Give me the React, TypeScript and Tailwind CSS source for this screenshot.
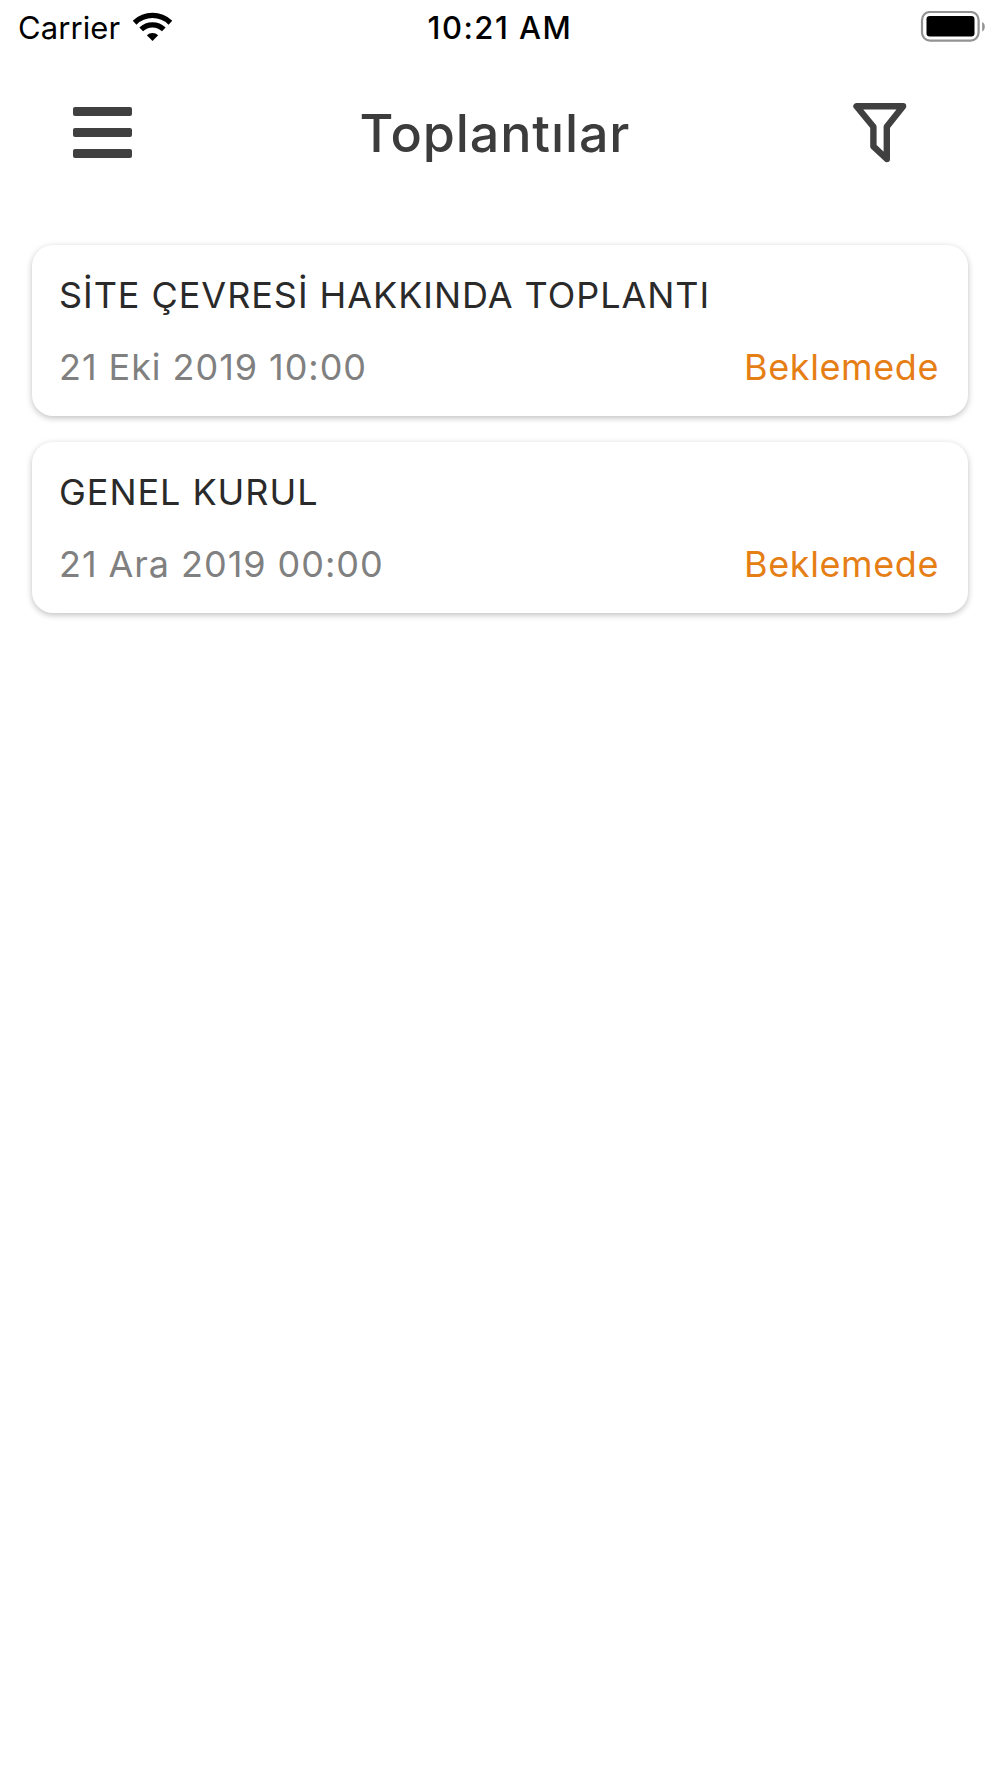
const meetings = [
    { title: "SİTE ÇEVRESİ HAKKINDA TOPLANTI", date: "21 Eki 2019 10:00", status: "Beklemede" },
    { title: "GENEL KURUL", date: "21 Ara 2019 00:00", status: "Beklemede" },
];

function WifiIcon() {
    return (
        <svg className="ml-[13px] h-[30px] w-[39px]" viewBox="0 0 40 30" fill="none" stroke="#000">
            <path d="M1.6 10.6a26.3 26.3 0 0 1 36.8 0" strokeWidth="5.6" />
            <path d="M8.4 17.4a16.7 16.7 0 0 1 23.2 0" strokeWidth="5.4" />
            <path d="M20 29.4l-5.8-6a8.5 8.5 0 0 1 11.6 0z" fill="#000" stroke="none" />
        </svg>
    );
}

function BatteryIcon() {
    return (
        <svg className="h-[32px] w-[65px]" viewBox="0 0 65 32" fill="none">
            <rect x="2" y="1" width="56.600" height="28.600" rx="8" stroke="#929292" strokeWidth="2.2" />
            <rect x="6.5" y="5" width="48" height="20.4" rx="3.2" fill="#000" />
            <path d="M62.2 11c1.6.6 2.6 2.5 2.6 4.7s-1 4.100-2.600 4.700z" fill="#929292" />
        </svg>
    );
}

function StatusBar() {
    return (
        <div className="grid h-[54px] grid-cols-3 items-center px-[15px] text-black">
            <div className="flex items-center pl-[3px]">
                <span className="pt-[1px] text-[31px] leading-[53px] tracking-[0.1px]">Carrier</span>
                <WifiIcon />
            </div>
            <span className="pt-[1px] text-center text-[31px] font-medium leading-[53px] tracking-[1.500px]">10:21 AM</span>
            <div className="flex justify-end">
                <BatteryIcon />
            </div>
        </div>
    );
}

function Header() {
    return (
        <div className="flex h-[157px] items-center justify-between pl-[73px] pr-[93px]">
            <button className="flex flex-col gap-[12px]">
                <div className="h-[9px] w-[59px] rounded-[2px] bg-[#404040]"></div>
                <div className="h-[9px] w-[59px] rounded-[2px] bg-[#404040]"></div>
                <div className="h-[9px] w-[59px] rounded-[2px] bg-[#404040]"></div>
            </button>
            <h1 className="pl-[5px] pt-[2px] text-[52px] font-medium leading-[60px] tracking-[0.9px] text-[#3c3c3c]">Toplantılar</h1>
            <button>
                <svg className="h-[60px] w-[54px]" viewBox="0 0 54 60" fill="none" stroke="#404040" strokeWidth="6.4" strokeLinejoin="round">
                    <path d="M3.500 3.300h46.600L33.800 23.800v32.200L20.400 43.400V23.800z" />
                </svg>
            </button>
        </div>
    );
}

export default function App() {
    return (
        <div className="min-h-[1778px] w-[1000px] bg-white font-['Inter',sans-serif]">
            <StatusBar />
            <Header />
            <div className="flex flex-col gap-[26px] px-8 pt-[34px]">
                {meetings.map((m) => (
                    <div key={m.title} className="flex h-[171px] flex-col gap-7 rounded-[21px] bg-white pl-[27px] pr-[29px] pt-7 shadow-[0_2px_6px_rgba(0,0,0,0.25)]">
                        <h2 className="text-[36px] leading-[44px] tracking-[0.95px] text-[#2a2a2a]">{m.title}</h2>
                        <div className="flex justify-between text-[36px] leading-[44px]">
                            <span className="tracking-[0.95px] text-[#808080]">{m.date}</span>
                            <span className="tracking-[0.6px] text-[#e67e16]">{m.status}</span>
                        </div>
                    </div>
                ))}
            </div>
        </div>
    );
}
